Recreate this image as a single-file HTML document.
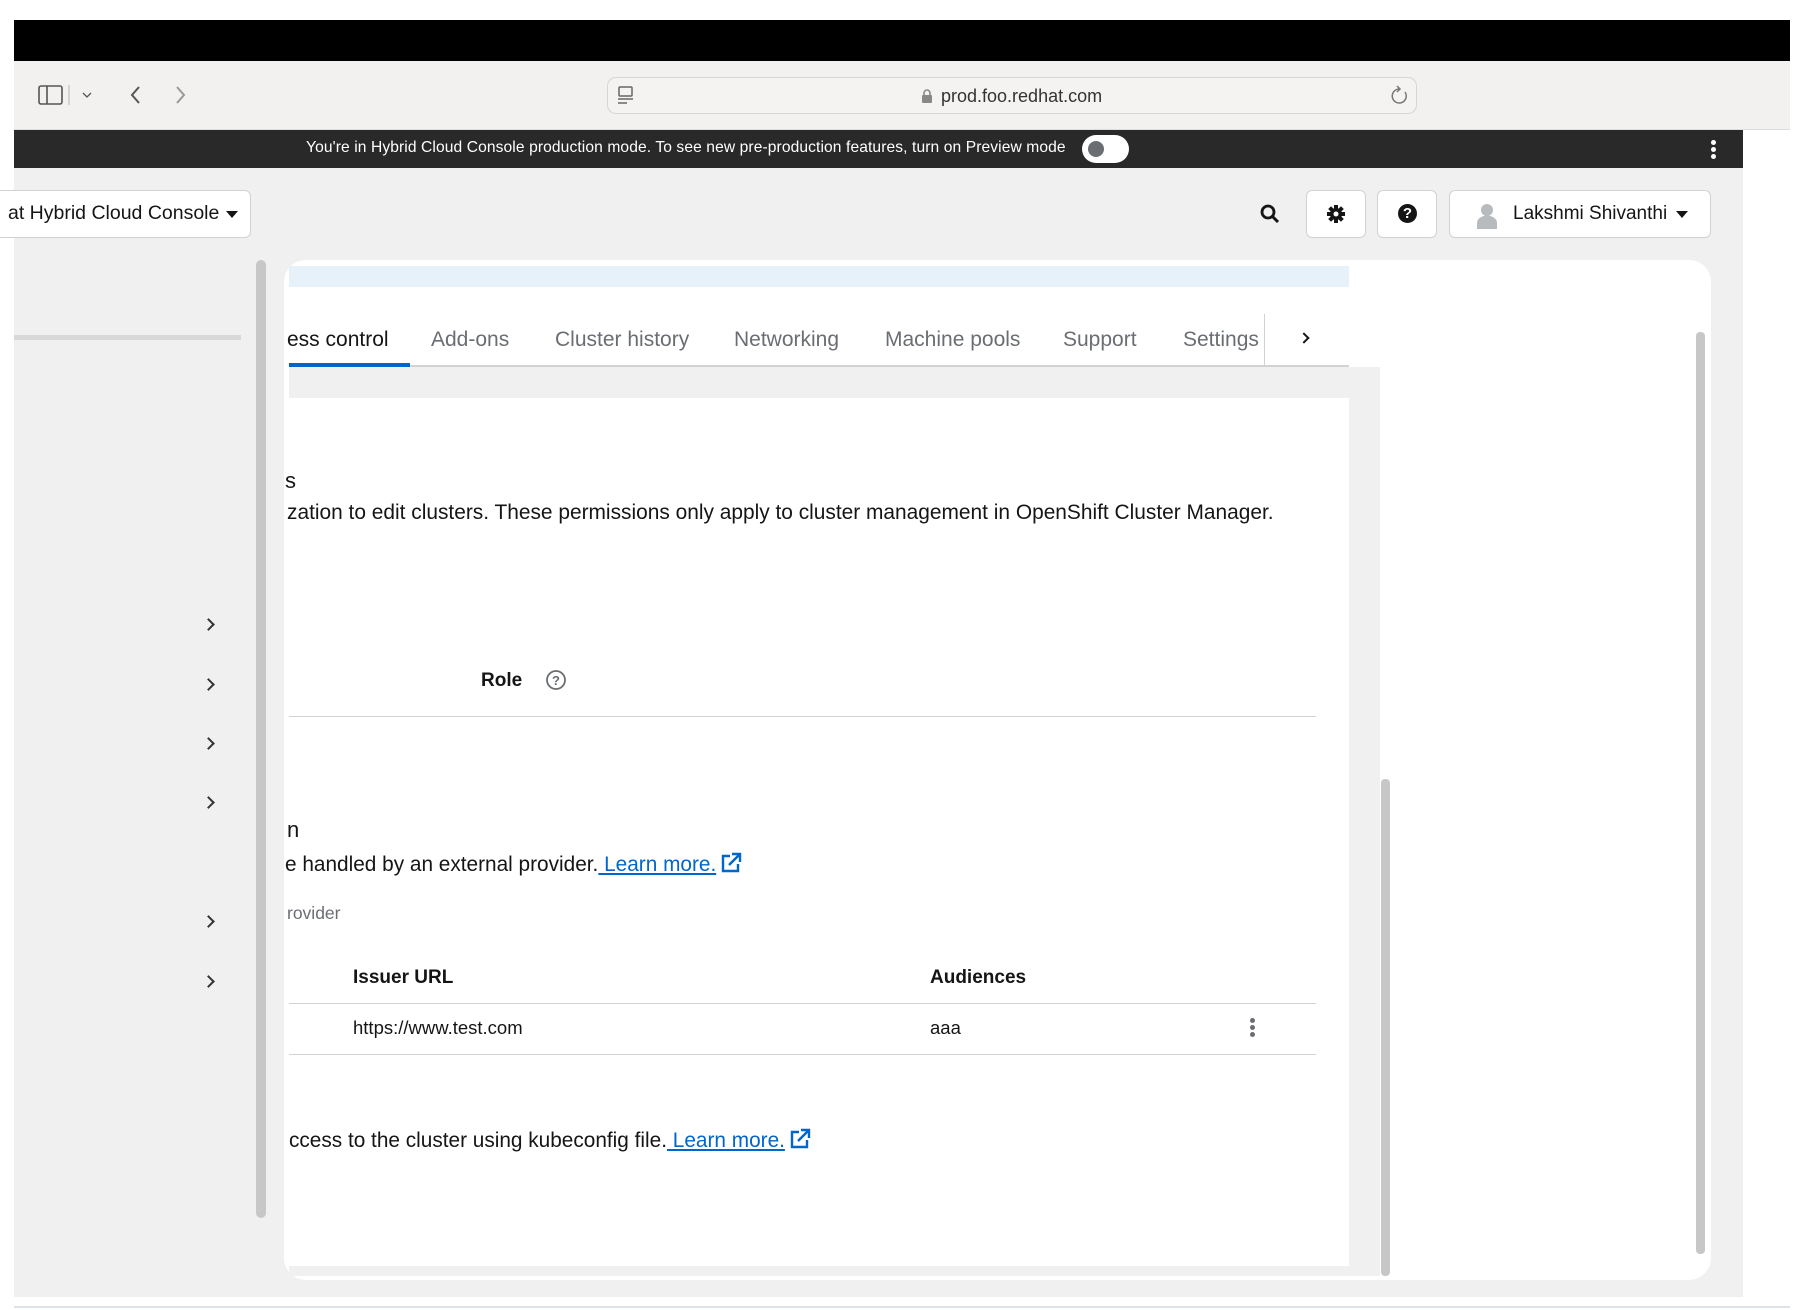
<!DOCTYPE html>
<html><head><meta charset="utf-8"><style>
*{box-sizing:border-box;margin:0;padding:0}
body{width:1804px;height:1310px;background:#fff;position:relative;overflow:hidden;font-family:"Liberation Sans",sans-serif;color:#151515}
.a{position:absolute}
.t{position:absolute;white-space:nowrap;line-height:1}
.chev{position:absolute;width:9px;height:9px;border-right:2.5px solid #333;border-top:2.5px solid #333;transform:rotate(45deg)}
a{color:#0066cc;text-decoration:underline}
.ext{display:inline-block;vertical-align:-3px;margin-left:4px}
</style></head><body>
<div class="a" style="left:14px;top:20px;width:1776px;height:41px;background:#000"></div>
<div class="a" style="left:14px;top:61px;width:1776px;height:69px;background:#f2f1f0;border-bottom:1px solid #ddd"></div>
<svg class="a" style="left:36px;top:82px" width="160" height="26" viewBox="0 0 160 26" fill="none" stroke="#555" stroke-width="1.6">
<rect x="3" y="4" width="23" height="18" rx="2"/><line x1="11" y1="4" x2="11" y2="22"/>
<line x1="33" y1="3" x2="33" y2="23" stroke="#ccc"/>
<polyline points="47,11 51,15 55,11" stroke-width="1.3"/>
<polyline points="103,5 96,13 103,21" stroke-width="2"/>
<polyline points="141,5 148,13 141,21" stroke="#999" stroke-width="2"/>
</svg>
<div class="a" style="left:607px;top:77px;width:810px;height:37px;border:1px solid #d6d6d6;border-radius:9px;background:#f4f3f2"></div>
<svg class="a" style="left:617px;top:86px" width="18" height="20" fill="none" stroke="#666" stroke-width="1.5"><rect x="2" y="1" width="13" height="9" rx="1"/><line x1="1" y1="13" x2="16" y2="13"/><line x1="1" y1="17" x2="10" y2="17"/></svg>
<svg class="a" style="left:921px;top:88px" width="12" height="16"><rect x="1" y="7" width="10" height="8" rx="1" fill="#888"/><path d="M3 7V5a3 3 0 0 1 6 0v2" stroke="#888" stroke-width="1.6" fill="none"/></svg>
<div class="t" style="left:941px;top:87px;font-size:18px;color:#333">prod.foo.redhat.com</div>
<svg class="a" style="left:1390px;top:85px" width="20" height="22" fill="none" stroke="#777" stroke-width="1.5"><path d="M15 7a7 7 0 1 1-6-3"/><polyline points="7,1 10,4 7,7"/></svg>
<div class="a" style="left:14px;top:130px;width:1729px;height:38px;background:#292929"></div>
<div class="t" style="left:306px;top:140px;font-size:15.6px;color:#fff;letter-spacing:0.1px">You're in Hybrid Cloud Console production mode. To see new pre-production features, turn on Preview mode</div>
<div class="a" style="left:1082px;top:135px;width:47px;height:28px;border-radius:14px;background:#fff"></div>
<div class="a" style="left:1088px;top:141px;width:16px;height:16px;border-radius:50%;background:#6a6e73"></div>
<div class="a" style="left:1711px;top:140px;width:5px;height:5px;border-radius:50%;background:#fff;box-shadow:0 7px 0 #fff,0 14px 0 #fff"></div>
<div class="a" style="left:14px;top:168px;width:1729px;height:1129px;background:#f0f0f0"></div>
<div class="a" style="left:14px;top:1306px;width:1776px;height:2px;background:#dde3e6"></div>
<div class="a" style="left:-10px;top:190px;width:261px;height:48px;background:#fff;border:1px solid #d2d2d2;border-radius:6px"></div>
<div class="t" style="left:8px;top:204px;font-size:19.5px;color:#151515">at Hybrid Cloud Console</div>
<div class="a" style="left:226px;top:211px;border-left:6px solid transparent;border-right:6px solid transparent;border-top:7px solid #151515"></div>
<svg class="a" style="left:1259px;top:203px" width="22" height="22"><circle cx="9" cy="9" r="6" stroke="#151515" stroke-width="2.8" fill="none"/><line x1="13" y1="13" x2="19" y2="19" stroke="#151515" stroke-width="3"/></svg>
<div class="a" style="left:1306px;top:190px;width:60px;height:48px;background:#fff;border:1px solid #d2d2d2;border-radius:6px"></div>
<svg class="a" style="left:1326px;top:204px" width="20" height="20" viewBox="0 0 20 20"><g fill="#151515"><circle cx="10" cy="10" r="6"/><rect x="8" y="1" width="4" height="18"/><rect x="1" y="8" width="18" height="4"/><rect x="8" y="1" width="4" height="18" transform="rotate(45 10 10)"/><rect x="8" y="1" width="4" height="18" transform="rotate(-45 10 10)"/></g><circle cx="10" cy="10" r="2.5" fill="#fff"/></svg>
<div class="a" style="left:1377px;top:190px;width:60px;height:48px;background:#fff;border:1px solid #d2d2d2;border-radius:6px"></div>
<div class="a" style="left:1398px;top:204px;width:19px;height:19px;border-radius:50%;background:#151515;color:#fff;font-size:15px;font-weight:bold;text-align:center;line-height:19px">?</div>
<div class="a" style="left:1449px;top:190px;width:262px;height:48px;background:#fff;border:1px solid #d2d2d2;border-radius:6px"></div>
<svg class="a" style="left:1476px;top:203px" width="22" height="26"><circle cx="11" cy="7" r="6" fill="#b8bbbe"/><path d="M1 26v-6a8 6 0 0 1 20 0v6z" fill="#b8bbbe"/></svg>
<div class="t" style="left:1513px;top:204px;font-size:19px">Lakshmi Shivanthi</div>
<div class="a" style="left:1676px;top:211px;border-left:6px solid transparent;border-right:6px solid transparent;border-top:7px solid #151515"></div>
<div class="a" style="left:14px;top:335px;width:227px;height:5px;background:#d8d8d8"></div>
<div class="a" style="left:256px;top:260px;width:10px;height:958px;border-radius:5px;background:#c7c7c7"></div>
<div class="chev" style="left:204px;top:620px"></div>
<div class="chev" style="left:204px;top:680px"></div>
<div class="chev" style="left:204px;top:739px"></div>
<div class="chev" style="left:204px;top:798px"></div>
<div class="chev" style="left:204px;top:917px"></div>
<div class="chev" style="left:204px;top:977px"></div>
<div class="a" style="left:284px;top:260px;width:1427px;height:1020px;background:#fff;border-radius:22px"></div>
<div class="a" style="left:289px;top:266px;width:1060px;height:21px;background:#e7f1fa"></div>
<div class="t" style="left:287px;top:329px;font-size:21px;color:#151515">ess control</div>
<div class="t" style="left:431px;top:329px;font-size:21px;color:#6a6e73">Add-ons</div>
<div class="t" style="left:555px;top:329px;font-size:21px;color:#6a6e73">Cluster history</div>
<div class="t" style="left:734px;top:329px;font-size:21px;color:#6a6e73">Networking</div>
<div class="t" style="left:885px;top:329px;font-size:21px;color:#6a6e73">Machine pools</div>
<div class="t" style="left:1063px;top:329px;font-size:21px;color:#6a6e73">Support</div>
<div class="t" style="left:1183px;top:329px;font-size:21px;color:#6a6e73">Settings</div>
<div class="a" style="left:1264px;top:314px;width:1px;height:52px;background:#d2d2d2"></div>
<div class="a" style="left:1300px;top:334px;width:8px;height:8px;border-right:2.5px solid #151515;border-top:2.5px solid #151515;transform:rotate(45deg)"></div>
<div class="a" style="left:289px;top:365px;width:1060px;height:2px;background:#d2d2d2"></div>
<div class="a" style="left:289px;top:363px;width:121px;height:4px;background:#0066cc"></div>
<div class="a" style="left:289px;top:367px;width:1091px;height:31px;background:#f0f0f0"></div>
<div class="a" style="left:1349px;top:367px;width:31px;height:909px;background:#f0f0f0"></div>
<div class="a" style="left:1381px;top:779px;width:9px;height:497px;border-radius:4px;background:#c7c7c7"></div>
<div class="a" style="left:289px;top:1266px;width:1060px;height:10px;background:#f0f0f0"></div>
<div class="a" style="left:1696px;top:332px;width:9px;height:922px;border-radius:4px;background:#c7c7c7"></div>
<div class="t" style="left:285px;top:470px;font-size:22px">s</div>
<div class="t" style="left:287px;top:503px;font-size:20.9px">zation to edit clusters. These permissions only apply to cluster management in OpenShift Cluster Manager.</div>
<div class="t" style="left:481px;top:671px;font-size:19px;font-weight:bold">Role</div>
<svg class="a" style="left:545px;top:669px" width="22" height="22"><circle cx="11" cy="11" r="9" stroke="#6a6e73" stroke-width="1.8" fill="none"/><text x="11" y="16" font-size="13" font-family="Liberation Sans" text-anchor="middle" fill="#6a6e73" font-weight="bold">?</text></svg>
<div class="a" style="left:289px;top:716px;width:1027px;height:1px;background:#d2d2d2"></div>
<div class="t" style="left:287px;top:819px;font-size:22px">n</div>
<div class="t" style="left:285px;top:852px;font-size:20.8px">e handled by an external provider.<a> Learn more.</a><svg class="ext" width="22" height="22" fill="none" stroke="#0066cc" stroke-width="2.4"><path d="M10 4H3v15h15v-7"/><path d="M9 13L19 3M12 2h8v8"/></svg></div>
<div class="t" style="left:287px;top:905px;font-size:17.5px;color:#6a6e73">rovider</div>
<div class="t" style="left:353px;top:968px;font-size:19px;font-weight:bold">Issuer URL</div>
<div class="t" style="left:930px;top:968px;font-size:19px;font-weight:bold">Audiences</div>
<div class="a" style="left:289px;top:1003px;width:1027px;height:1px;background:#d2d2d2"></div>
<div class="t" style="left:353px;top:1019px;font-size:18.5px">https://www.test.com</div>
<div class="t" style="left:930px;top:1019px;font-size:18.5px">aaa</div>
<div class="a" style="left:1250px;top:1018px;width:5px;height:5px;border-radius:50%;background:#6a6e73;box-shadow:0 7px 0 #6a6e73,0 14px 0 #6a6e73"></div>
<div class="a" style="left:289px;top:1054px;width:1027px;height:1px;background:#d2d2d2"></div>
<div class="t" style="left:289px;top:1128px;font-size:20.8px">ccess to the cluster using kubeconfig file.<a> Learn more.</a><svg class="ext" width="22" height="22" fill="none" stroke="#0066cc" stroke-width="2.4"><path d="M10 4H3v15h15v-7"/><path d="M9 13L19 3M12 2h8v8"/></svg></div>
</body></html>
